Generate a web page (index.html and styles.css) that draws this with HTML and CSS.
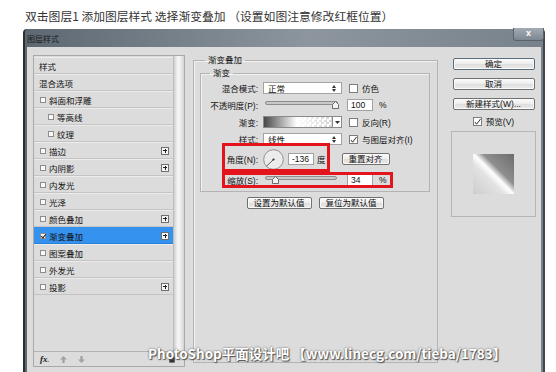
FILE: index.html
```html
<!DOCTYPE html>
<html lang="zh-CN">
<head>
    <meta charset="UTF-8">
    <meta name="viewport" content="width=device-width, initial-scale=1.0">
    <title>图层样式 - 渐变叠加</title>
    <link rel="stylesheet" href="styles.css">
</head>
<body>
    <p class="caption">双击图层1 添加图层样式 选择渐变叠加 （设置如图注意修改红框位置）</p>

    <div class="window">
        <div class="titlebar">
            <span class="title">图层样式</span>
            <span class="close">x</span>
        </div>

        <div class="client">
            <!-- left: style list -->
            <div class="layers">
                <div class="layer-body">
                    <ul class="layer-list">
                        <li class="row">样式</li>
                        <li class="row">混合选项</li>
                        <li class="row"><span class="cb"></span>斜面和浮雕</li>
                        <li class="row sub"><span class="cb"></span>等高线</li>
                        <li class="row sub"><span class="cb"></span>纹理</li>
                        <li class="row"><span class="cb"></span>描边<span class="plus"></span></li>
                        <li class="row"><span class="cb"></span>内阴影<span class="plus"></span></li>
                        <li class="row"><span class="cb"></span>内发光</li>
                        <li class="row"><span class="cb"></span>光泽</li>
                        <li class="row"><span class="cb"></span>颜色叠加<span class="plus"></span></li>
                        <li class="row active"><span class="cb on"></span>渐变叠加<span class="plus"></span></li>
                        <li class="row"><span class="cb"></span>图案叠加</li>
                        <li class="row"><span class="cb"></span>外发光</li>
                        <li class="row"><span class="cb"></span>投影<span class="plus"></span></li>
                    </ul>
                    <div class="scrollbar"></div>
                </div>
                <div class="layer-foot">
                    <span class="fx">fx<small>.</small></span>
                    <svg class="arrow" width="7" height="7" viewBox="0 0 7 7"><path d="M3.5 0 L7 3.5 H4.7 V7 H2.3 V3.5 H0 Z" fill="#a3a3a3"/></svg>
                    <svg class="arrow" width="7" height="7" viewBox="0 0 7 7"><path d="M3.5 7 L7 3.5 H4.7 V0 H2.3 V3.5 H0 Z" fill="#a3a3a3"/></svg>
                    <svg class="trash" width="8" height="8" viewBox="0 0 8 8"><path d="M0.5 2 H7.5 M2.5 2 V0.8 H5.5 V2" stroke="#333" fill="none"/><rect x="1.3" y="2.6" width="5.4" height="5" fill="#333"/></svg>
                </div>
            </div>

            <!-- middle: gradient overlay options -->
            <div class="options">
                <fieldset class="group outer">
                    <legend>渐变叠加</legend>
                    <fieldset class="group inner">
                        <legend>渐变</legend>

                        <div class="field">
                            <span class="lbl">混合模式:</span>
                            <span class="select">正常<svg class="updown" width="4" height="7" viewBox="0 0 4 7"><path d="M0 3 L2 0 L4 3 Z M0 4 L2 7 L4 4 Z" fill="#333"/></svg></span>
                            <span class="check"><span class="box"></span>仿色</span>
                        </div>

                        <div class="field">
                            <span class="lbl">不透明度(P):</span>
                            <span class="slider">
                                <span class="track"></span>
                                <svg class="thumb" style="left: 67px" width="7" height="8" viewBox="0 0 7 8"><path d="M0.5 7.5 V3.5 L3.5 0.5 L6.5 3.5 V7.5 Z" fill="#f4f4f4" stroke="#6a6a6a"/></svg>
                            </span>
                            <span class="num">100</span>
                            <span class="unit">%</span>
                        </div>

                        <div class="field">
                            <span class="lbl">渐变:</span>
                            <span class="swatch"></span><span class="drop"><svg width="5" height="3" viewBox="0 0 5 3"><path d="M0 0 H5 L2.5 3 Z" fill="#333"/></svg></span>
                            <span class="check"><span class="box"></span>反向(R)</span>
                        </div>

                        <div class="field">
                            <span class="lbl">样式:</span>
                            <span class="select">线性<svg class="updown" width="4" height="7" viewBox="0 0 4 7"><path d="M0 3 L2 0 L4 3 Z M0 4 L2 7 L4 4 Z" fill="#333"/></svg></span>
                            <span class="check"><span class="box"><svg width="8" height="8" viewBox="0 0 8 8"><path d="M1 4 L3 6.5 L7.5 0.5" stroke="#222" stroke-width="1.1" fill="none"/></svg></span>与图层对齐(I)</span>
                        </div>

                        <div class="field angle">
                            <span class="lbl">角度(N):</span>
                            <svg class="dial" width="21" height="21" viewBox="0 0 21 21"><circle cx="10.5" cy="10.5" r="9.8" fill="#ececec" stroke="#7c7c7c" stroke-width="0.8"/><path d="M10.5 10.5 L3.5 17.2" stroke="#333" stroke-width="0.8"/><circle cx="10.5" cy="10.5" r="1.1" fill="#333"/></svg>
                            <span class="num">-136</span>
                            <span class="unit deg">度</span>
                            <span class="btn reset">重置对齐</span>
                            <span class="mark mark-angle"></span>
                        </div>

                        <div class="field scale">
                            <span class="lbl">缩放(S):</span>
                            <span class="slider short">
                                <span class="track"></span>
                                <svg class="thumb" style="left: 7px" width="7" height="8" viewBox="0 0 7 8"><path d="M0.5 7.5 V3.5 L3.5 0.5 L6.5 3.5 V7.5 Z" fill="#f4f4f4" stroke="#6a6a6a"/></svg>
                            </span>
                            <span class="num">34</span>
                            <span class="unit">%</span>
                            <span class="mark mark-scale"></span>
                        </div>
                    </fieldset>

                    <div class="defaults">
                        <span class="btn wide">设置为默认值</span>
                        <span class="btn wide">复位为默认值</span>
                    </div>
                </fieldset>
            </div>

            <!-- right: buttons and preview -->
            <div class="actions">
                <span class="btn action primary">确定</span>
                <span class="btn action">取消</span>
                <span class="btn action">新建样式(W)...</span>
                <span class="preview-check"><span class="box"><svg width="8" height="8" viewBox="0 0 8 8"><path d="M1 4 L3 6.5 L7.5 0.5" stroke="#222" stroke-width="1.1" fill="none"/></svg></span>预览(V)</span>
                <div class="preview">
                    <div class="sample"></div>
                </div>
            </div>
        </div>
    </div>

    <div class="watermark">PhotoShop平面设计吧 【www.linecg.com/tieba/1783】</div>
</body>
</html>
```

FILE: styles.css
```css
* {
    box-sizing: border-box;
}

html, body {
    margin: 0;
}

body {
    width: 556px;
    height: 372px;
    overflow: hidden;
    position: relative;
    background: #ffffff;
    font-family: "Liberation Sans", "Noto Sans CJK SC", sans-serif;
    color: #111;
}

.caption {
    margin: 0;
    height: 29px;
    padding: 9px 0 0 25px;
    font: 11.8px/14px "Noto Sans CJK SC", sans-serif;
    color: #333;
}

/* window frame */
.window {
    margin-left: 23px;
    width: 522px;
    height: 343px;
    padding: 0 2px;
    border-left: 2px solid #2a2e32;
    border-right: 2px solid #40464c;
    border-radius: 4px 4px 0 0;
    background: linear-gradient(90deg, #5d6872, #8d969e 55%, #78828b);
}

.titlebar {
    height: 18px;
    display: flex;
    justify-content: space-between;
    align-items: flex-start;
}

.title {
    align-self: center;
    font-size: 8px;
    color: #1b1b1b;
}

.close {
    width: 31px;
    height: 13px;
    margin: -1px -3px 0 0;
    border: 1px solid #5a636b;
    border-top: none;
    border-radius: 0 0 3px 3px;
    background: linear-gradient(#a3acb4, #7d8790);
    color: #fff;
    font: bold 9px/11px "Liberation Sans", sans-serif;
    text-align: center;
}

.client {
    height: 325px;
    background: #dcdcdc;
    display: flex;
    align-items: flex-start;
    padding: 7px 0 0 6px;
}

/* style list */
.layers {
    width: 152px;
    height: 312px;
    margin-top: 1px;
    border: 1px solid #a9a9a9;
    display: flex;
    flex-direction: column;
}

.layer-body {
    flex: 1;
    display: flex;
}

.layer-list {
    flex: 1;
    list-style: none;
    margin: 0;
    padding: 1px 0 0 0;
}

.row {
    height: 17px;
    display: flex;
    align-items: center;
    padding-left: 5px;
    border-top: 1px solid #ececec;
    border-bottom: 1px solid #c4c4c4;
    font-size: 8.5px;
}

.row .cb {
    width: 6px;
    height: 6px;
    margin: 0 3px 0 1px;
    border: 1px solid #8c8c8c;
    background: #fafafa;
    position: relative;
}

.row.sub {
    padding-left: 13px;
}

.row .cb.on::after {
    content: "";
    position: absolute;
    left: 1px;
    top: -1px;
    width: 2px;
    height: 4px;
    border: solid #222;
    border-width: 0 1px 1px 0;
    transform: rotate(40deg);
}

.row.active {
    background: #3592ef;
    border-top-color: #3592ef;
    border-bottom-color: #2a7fd6;
}

.plus {
    width: 8px;
    height: 8px;
    margin: 0 4px 0 auto;
    border: 1px solid #6f6f6f;
    background:
        linear-gradient(#222, #222) center / 4px 1px no-repeat,
        linear-gradient(#222, #222) center / 1px 4px no-repeat,
        #f4f4f4;
}

.scrollbar {
    width: 11px;
    border-left: 1px solid #bcbcbc;
    background: linear-gradient(90deg, #cfcfcf, #f7f7f7 40%, #ebebeb 70%, #d2d2d2);
}

.layer-foot {
    height: 15px;
    border-top: 1px solid #b3b3b3;
    display: flex;
    align-items: center;
    padding: 0 4px 0 6px;
    gap: 11px;
}

.fx {
    font: italic bold 9px "Liberation Serif", serif;
    color: #222;
}

.fx small {
    font-size: 7px;
}

.trash {
    margin-left: auto;
    margin-right: 4px;
}

/* options */
.options {
    width: 245px;
    margin-left: 8px;
}

.group {
    margin: 0;
    border: 1px solid #b3b3b3;
    box-shadow: inset 1px 1px 0 #f1f1f1;
    min-width: 0;
}

.group legend {
    padding: 0 3px;
    font-size: 8.5px;
    line-height: 12px;
}

.outer {
    height: 309px;
    padding: 1px 7px 0 6px;
}

.outer > legend {
    margin-left: 5px;
}

.inner {
    padding: 0 0 3px 0;
}

.inner > legend {
    margin-left: 9px;
}

.field {
    height: 16px;
    margin-top: 1px;
    display: flex;
    align-items: center;
    position: relative;
    font-size: 8.5px;
}

.field.angle {
    height: 22px;
}

.field.scale {
    margin-top: 2px;
}

.lbl {
    width: 57px;
    margin-right: 5px;
    text-align: right;
    white-space: nowrap;
}

.select {
    width: 79px;
    height: 12px;
    display: flex;
    align-items: center;
    padding: 0 5px 0 4px;
    background: #fff;
    border: 1px solid #a3a3a3;
}

.updown {
    margin-left: auto;
}

.check, .preview-check {
    display: flex;
    align-items: center;
    gap: 4px;
}

.check {
    margin-left: 7px;
}

.box {
    width: 9px;
    height: 9px;
    border: 1px solid #7d7d7d;
    background: #fff;
    display: flex;
}

.slider {
    width: 73px;
    height: 12px;
    margin: 0 9px 0 2px;
    position: relative;
}

.slider.short {
    width: 72px;
    margin-right: 10px;
}

.track {
    display: block;
    margin-top: 2px;
    height: 4px;
    border: 1px solid #8d8d8d;
    border-radius: 2px;
    background: #c9c9c9;
}

.thumb {
    position: absolute;
    top: 2px;
}

.num {
    width: 26px;
    height: 12px;
    padding-left: 3px;
    border: 1px solid #a1a1a1;
    background: #fff;
    line-height: 10px;
}

.unit {
    margin-left: 6px;
}

.unit.deg {
    margin-left: 3px;
}

.swatch {
    width: 69px;
    height: 12px;
    border: 1px solid #8a8a8a;
    border-right: none;
    background:
        linear-gradient(90deg, #474747 0%, #ffffff 48%, rgba(255, 255, 255, 0) 100%),
        repeating-conic-gradient(#d2d2d2 0 25%, #ffffff 0 50%) 0 0 / 5px 5px;
}

.drop {
    width: 10px;
    height: 12px;
    border: 1px solid #8a8a8a;
    background: #fff;
    display: flex;
    align-items: center;
    justify-content: center;
}

.dial {
    display: block;
}

.angle .num {
    margin-left: 4px;
}

.btn {
    height: 12px;
    border: 1px solid #707070;
    border-radius: 2px;
    background: linear-gradient(#fcfcfc, #ececec 50%, #dedede 51%, #ebebeb);
    box-shadow: inset 0 0 0 1px #fbfbfb;
    font-size: 8.5px;
    line-height: 10px;
    text-align: center;
    white-space: nowrap;
}

.reset {
    width: 48px;
    margin-left: 16px;
}

.mark {
    position: absolute;
    border: 3px solid #e3141c;
}

.mark-angle {
    left: 21px;
    top: -5px;
    width: 108px;
    height: 29px;
}

.mark-scale {
    left: 21px;
    top: 0;
    width: 171px;
    height: 16px;
}

.defaults {
    margin-top: 5px;
    display: flex;
    justify-content: center;
    gap: 7px;
}

.btn.wide {
    width: 65px;
}

/* right column */
.actions {
    width: 85px;
    margin: 4px 0 0 13px;
    display: flex;
    flex-direction: column;
    align-items: center;
}

.btn.action {
    display: block;
    width: 82px;
    margin-bottom: 8px;
}

.btn.primary {
    border-color: #5a6c80;
}

.preview-check {
    height: 12px;
    margin-top: -3px;
    font-size: 8.5px;
}

.preview {
    width: 85px;
    height: 86px;
    margin-top: 4px;
    border: 1px solid #b5b5b5;
    display: flex;
    align-items: center;
    justify-content: center;
}

.sample {
    width: 41px;
    height: 40px;
    background: linear-gradient(225deg, #6c6c6c 0%, #8e8e8e 38%, #ffffff 50%, #e2e2e2 62%, #cdcdcd 100%);
}

/* overlay text */
.watermark {
    position: absolute;
    left: 148px;
    top: 345px;
    font: bold 13.5px/16px "Noto Sans CJK SC", sans-serif;
    color: #ffffff;
    white-space: nowrap;
    text-shadow: 0 0 2px #4a4a4a, 1px 1px 1px #555;
}
```
